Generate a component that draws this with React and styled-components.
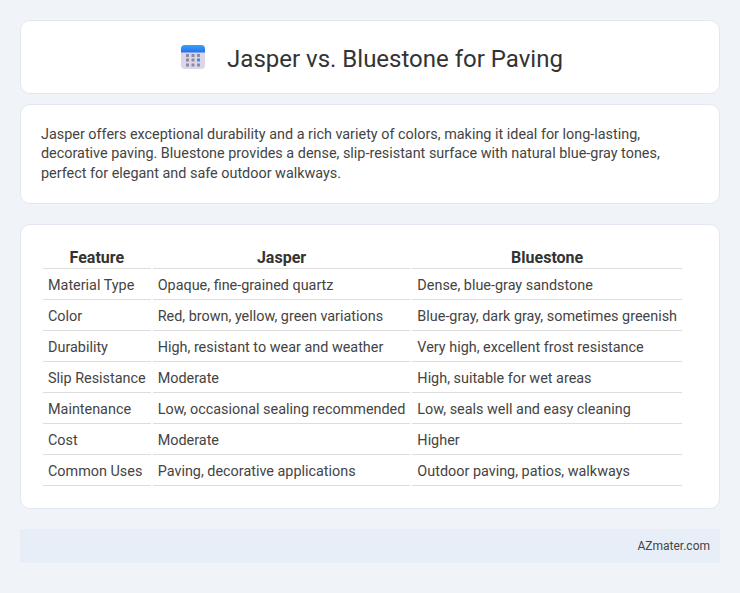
import React from "react";
import styled, { createGlobalStyle } from "styled-components";

const GlobalStyle = createGlobalStyle`
  body {
    margin: 0;
    background: #f0f4f8;
    font-family: Roboto, "Liberation Sans", sans-serif;
    color: #444;
  }
`;

const Page = styled.div`
  padding: 20px 20px 30px;
  display: flex;
  flex-direction: column;
`;

const Card = styled.div`
  background: #fff;
  border: 1px solid #e3e8f0;
  border-radius: 10px;
  box-sizing: border-box;
  margin-bottom: ${(p) => p.$gap}px;
`;

const Header = styled(Card)`
  height: 74px;
  padding-left: 4px;
  display: flex;
  align-items: center;
  justify-content: center;
  gap: 22px;
`;

const Title = styled.h1`
  margin: 4px 0 0;
  font-size: 24px;
  font-weight: 400;
  color: #333;
`;

const Intro = styled(Card)`
  padding: 20px;
  height: 100px;
  font-size: 14.4px;
  line-height: 1.35;
`;

const TableCard = styled(Card)`
  padding: 20px;
  height: 285px;
`;

const Table = styled.table`
  border-spacing: 2px;
  border-collapse: separate;
  font-size: 14.4px;
`;

const Th = styled.th`
  font-size: 16px;
  font-weight: 700;
  padding: 1px 5px;
  line-height: 19px;
  border-bottom: 1px solid #ddd;
  text-align: center;
  color: #333;
`;

const Td = styled.td`
  padding: 6px 5px 4px;
  line-height: 18px;
  border-bottom: 1px solid #ddd;
  white-space: nowrap;
`;

const Footer = styled.div`
  background: #e8eef8;
  height: 34px;
  display: flex;
  align-items: center;
  justify-content: flex-end;
  padding-right: 10px;
  font-size: 12px;
  color: #444;
`;

const rows = [
  ["Material Type", "Opaque, fine-grained quartz", "Dense, blue-gray sandstone"],
  ["Color", "Red, brown, yellow, green variations", "Blue-gray, dark gray, sometimes greenish"],
  ["Durability", "High, resistant to wear and weather", "Very high, excellent frost resistance"],
  ["Slip Resistance", "Moderate", "High, suitable for wet areas"],
  ["Maintenance", "Low, occasional sealing recommended", "Low, seals well and easy cleaning"],
  ["Cost", "Moderate", "Higher"],
  ["Common Uses", "Paving, decorative applications", "Outdoor paving, patios, walkways"],
];

function CalendarIcon() {
  const xs = [5, 10.5, 16];
  const ys = [9, 13.5, 18.5];
  return (
    <svg width="24" height="24" viewBox="0 0 24 24">
      <defs>
        <linearGradient id="calTop" x1="0" y1="0" x2="0" y2="1">
          <stop offset="0" stopColor="#35a4f5" />
          <stop offset="1" stopColor="#2a6ff0" />
        </linearGradient>
      </defs>
      <rect x="0" y="0" width="24" height="24" rx="4" fill="#ddd5ea" />
      <path d="M0 7.500V4a4 4 0 0 1 4-4h16a4 4 0 0 1 4 4v3.500z" fill="url(#calTop)" />
      {ys.map((y, i) =>
        xs.map((x, j) => (
          <rect key={x} x={x} y={y} width="3" height="3" fill={i === 1 && j === 2 ? "#2f8cf0" : "#8d8a99"} />
        ))
      )}
    </svg>
  );
}

export default function App() {
  return (
    <>
      <GlobalStyle />
      <Page>
        <Header $gap={10}>
          <CalendarIcon />
          <Title>Jasper vs. Bluestone for Paving</Title>
        </Header>
        <Intro $gap={20}>
          Jasper offers exceptional durability and a rich variety of colors, making it ideal for long-lasting,
          decorative paving. Bluestone provides a dense, slip-resistant surface with natural blue-gray tones,
          perfect for elegant and safe outdoor walkways.
        </Intro>
        <TableCard $gap={20}>
          <Table>
            <thead>
              <tr>
                <Th>Feature</Th>
                <Th>Jasper</Th>
                <Th>Bluestone</Th>
              </tr>
            </thead>
            <tbody>
              {rows.map((r) => (
                <tr key={r[0]}>
                  {r.map((c) => (
                    <Td key={c}>{c}</Td>
                  ))}
                </tr>
              ))}
            </tbody>
          </Table>
        </TableCard>
        <Footer>AZmater.com</Footer>
      </Page>
    </>
  );
}
